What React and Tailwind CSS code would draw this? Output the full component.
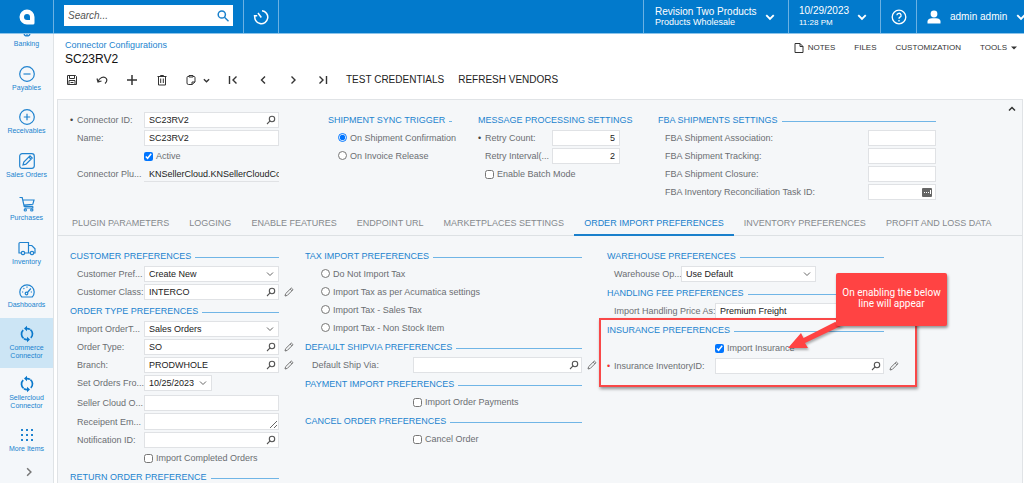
import { useId, useState } from 'react'

const TABS = [
  'PLUGIN PARAMETERS',
  'LOGGING',
  'ENABLE FEATURES',
  'ENDPOINT URL',
  'MARKETPLACES SETTINGS',
  'ORDER IMPORT PREFERENCES',
  'INVENTORY PREFERENCES',
  'PROFIT AND LOSS DATA',
]

function Icon({ className = 'w-4 h-4', size = 16, stroke = 1.2, children }) {
  return (
    <svg
      viewBox={`0 0 ${size} ${size}`}
      className={`block shrink-0 ${className}`}
      fill="none"
      stroke="currentColor"
      strokeWidth={stroke}
      aria-hidden="true"
    >
      {children}
    </svg>
  )
}

const Chevron = ({ className = 'w-2 h-2', stroke = 1.2 }) => (
  <Icon size={8} stroke={stroke} className={className}><path d="M1 2.5l3 3 3-3" /></Icon>
)

const Sync = () => (
  <Icon className="w-[18px] h-[18px] text-[#0a78cb]" size={18} stroke={1.7}>
    <path d="M5.6 13.4A5.4 5.4 0 0 1 5.2 5.2M12.4 4.6a5.4 5.4 0 0 1 .4 8.2" />
    <path d="M9 14.6A5.4 5.4 0 0 1 6 13.7M9 3.6a5.4 5.4 0 0 1 3 .8" />
    <path d="M9 .8v5.4L6 3.5zM9 17.2v-5.4l3 2.7z" fill="currentColor" stroke="none" />
  </Icon>
)

const NAV = [
  { label: 'Banking', icon: <Icon><path d="M8 10v4.500M5 11a3 3 0 0 0 6 0" /></Icon> },
  { label: 'Payables', icon: <Icon><circle cx="8" cy="8" r="7.300" /><path d="M4.500 8h7" /></Icon> },
  { label: 'Receivables', icon: <Icon><circle cx="8" cy="8" r="7.300" /><path d="M4.800 8h6.400M8 4.800v6.400" /></Icon> },
  {
    label: 'Sales Orders',
    icon: (
      <Icon>
        <rect x=".7" y=".7" width="14.600" height="14.600" rx="2.500" />
        <path d="M4 12l.8-3L11 2.800l2.200 2.200L7 11.200zM9.800 4l2.200 2.200" />
      </Icon>
    ),
  },
  {
    label: 'Purchases',
    icon: (
      <Icon>
        <path d="M.5 1.500h2.700l2 8.800h8.600M4 4h11l-1.200 4.300-9 .8M13.800 10.300v1.700H5.500" />
        <circle cx="6.300" cy="13.900" r="1.100" /><circle cx="12.800" cy="13.900" r="1.100" />
      </Icon>
    ),
  },
  {
    label: 'Inventory',
    icon: (
      <Icon className="w-[18px] h-[18px]" size={18}>
        <path d="M3 14H1V4.500q0-1 1-1h8.500V14H7M10.500 6.500h3.300L17 9.800V14h-1M12 14h-1.500" />
        <circle cx="5" cy="14" r="1.700" /><circle cx="14" cy="14" r="1.700" />
      </Icon>
    ),
  },
  {
    label: 'Dashboards',
    icon: (
      <Icon>
        <path d="M2.800 14a7.200 7.200 0 1 1 10.400 0z" />
        <circle cx="7.500" cy="10.500" r="1.300" />
        <path d="M8.500 9.500L11.800 5.500M3 9h1.200M8 3.600v1.200M4.500 5.200l.8.8M11.800 9H13" />
      </Icon>
    ),
  },
  { label: 'Commerce Connector', icon: <Sync />, tall: true, active: true },
  { label: 'Sellercloud Connector', icon: <Sync />, tall: true },
  {
    label: 'More Items',
    icon: (
      <Icon stroke={0}>
        {[3, 8, 13].map(y => [3, 8, 13].map(x => (
          <rect key={`${x}-${y}`} x={x - 1} y={y - 1} width="2" height="2" fill="currentColor" />
        )))}
      </Icon>
    ),
  },
]

function Sidebar() {
  return (
    <nav className="w-[54px] shrink-0 flex flex-col overflow-hidden bg-[#f4f7fa] border-r border-[#dfe3e6] text-[#2083cf]">
      {/* list is scrolled a little, the first icon is cut off */}
      <div className="flex-1 min-h-0 flex flex-col -mt-[21px]">
        {NAV.map(({ label, icon, tall, active }) => (
          <a
            key={label}
            href="#"
            className={`flex flex-col items-center gap-[2px] px-[6px] text-[7px] leading-[8px] text-center
                        ${tall ? 'h-[50px] shrink-0 pt-2' : 'flex-1 pt-[9px]'} ${active ? 'bg-[#cce5f5]' : ''}`}
          >
            <span className="h-4 flex items-center">{icon}</span>
            <span className={tall ? '' : 'whitespace-nowrap'}>{label}</span>
          </a>
        ))}
      </div>
      <button aria-label="Expand menu" className="h-[22px] flex justify-center pt-[6px] pl-1 text-[#777]">
        <Chevron className="w-[10px] h-[10px] -rotate-90" />
      </button>
    </nav>
  )
}

function Header() {
  return (
    <header className="h-[34px] shrink-0 flex bg-[#027acc] text-white border-b border-[#8cc4ea]">
      <a href="#" aria-label="Home" className="w-[54px] flex items-center justify-center border-r border-[#6bb1e3]">
        <svg viewBox="0 0 16 16" className="w-4 h-4">
          <path d="M8 .5a7.500 7.500 0 0 1 7.500 7.500v6q0 1.500-1.500 1.500H8A7.500 7.500 0 0 1 8 .5z" fill="white" />
          <path d="M8 5a3 3 0 0 1 3 3v3H8a3 3 0 0 1 0-6z" fill="#027acc" />
        </svg>
      </a>
      <div className="flex items-center px-[10px] pb-[2px] border-r border-[#6bb1e3]">
        <div className="w-[169px] h-[21px] flex items-center bg-white px-1">
          <input
            aria-label="Search"
            placeholder="Search..."
            className="flex-1 min-w-0 text-[10px] leading-4 italic text-[#333] placeholder:text-[#555] outline-none"
          />
          <button aria-label="Search" className="text-[#1a80cc]">
            <Icon className="w-3 h-3" size={12} stroke={1.5}>
              <circle cx="4.800" cy="4.500" r="3.600" /><path d="M7.500 7.200l4 4" />
            </Icon>
          </button>
        </div>
      </div>
      <button aria-label="Business date" className="w-[35px] flex items-center justify-center border-r border-[#6bb1e3]">
        <Icon stroke={1.5}><path d="M9 1.700A6.500 6.500 0 1 1 2 6.500M.8 6.800h3.400M8.300 8.500L5 4" /></Icon>
      </button>
      <div className="flex-1 border-r border-[#6bb1e3]" />
      <button className="w-[145px] flex items-center gap-2 pl-[11px] text-left border-r border-[#6bb1e3]">
        <span>
          <span className="block text-[10px] leading-[11px]">Revision Two Products</span>
          <span className="block text-[9px] leading-[11px]">Products Wholesale</span>
        </span>
        <Chevron className="w-[10px] h-[10px]" stroke={1.5} />
      </button>
      <button className="w-[92px] flex items-center gap-2 pl-[10px] text-left border-r border-[#6bb1e3]">
        <span>
          <span className="block text-[10px] leading-3">10/29/2023</span>
          <span className="block text-[8px] leading-3">11:28 PM</span>
        </span>
        <Chevron className="w-[10px] h-[10px]" stroke={1.5} />
      </button>
      <button aria-label="Help" className="w-9 flex items-center justify-center border-r border-[#6bb1e3]">
        <Icon stroke={1.3}>
          <circle cx="8" cy="8" r="6.800" />
          <path d="M5.900 6.300a2.100 2.100 0 1 1 3.100 1.900q-1 .5-1 1.500M8 11v1.400" />
        </Icon>
      </button>
      <button className="w-[107px] flex items-center gap-[9px] pl-[10px] whitespace-nowrap overflow-hidden">
        <svg viewBox="0 0 14 14" className="w-[14px] h-[14px] shrink-0" fill="white">
          <circle cx="7" cy="4" r="3.400" />
          <path d="M.5 13.500V11Q1 8.600 5 8.300h4q4 .3 4.500 2.700v2.500z" />
        </svg>
        <span className="text-[10px] leading-3">admin admin</span>
        <Chevron className="w-[10px] h-[10px]" stroke={1.5} />
      </button>
    </header>
  )
}

function ToolButton({ label, children }) {
  return (
    <button aria-label={label} className="w-[30px] h-6 flex items-center justify-center text-[#333]">{children}</button>
  )
}

function Toolbar() {
  return (
    <div className="flex items-center py-[1px]">
      <ToolButton label="Save">
        <Icon className="w-3 h-3" size={12} stroke={1}>
          <path d="M1.500 1.500h8l1 1v8h-9zM3.500 1.500v3h5v-3M3 10.500v-4h6v4M4.500 8.500h3" />
        </Icon>
      </ToolButton>
      <ToolButton label="Undo">
        <Icon className="w-3 h-3" size={12}><path d="M1 4.500l1 3.500 3.500-1M2 8C3 3.500 8 1.500 10.300 4.500q1.500 2.500-1.300 5" /></Icon>
      </ToolButton>
      <ToolButton label="Add">
        <Icon className="w-3 h-3" size={12} stroke={1.5}><path d="M1 6h10M6 1v10" /></Icon>
      </ToolButton>
      <ToolButton label="Delete">
        <Icon className="w-3 h-3" size={12} stroke={1}>
          <path d="M1.500 2.500h9M4.500 2.500v-1h3v1M2.500 2.500v8.500h7V2.500" />
          <path d="M4.700 4.500V9M7.300 4.500V9" />
        </Icon>
      </ToolButton>
      <button aria-label="Clipboard" className="w-[41px] h-6 flex items-center gap-[6px] pl-2 text-[#333]">
        <Icon className="w-3 h-3" size={12} stroke={1}>
          <path d="M4 2.500H3q-1 0-1 1V9q0 1.500 1.500 1.500H7L10 8V3.500q0-1-1-1H8M4 1.500h4v1.500H4zM7 10.500V8h3" />
        </Icon>
        <Chevron className="w-[7px] h-[7px]" stroke={1.5} />
      </button>
      <ToolButton label="First">
        <Icon className="w-3 h-3" size={12} stroke={1.4}><path d="M2.500 2v8M9.500 2.500L6 6l3.500 3.500" /></Icon>
      </ToolButton>
      <ToolButton label="Previous">
        <Icon className="w-3 h-3" size={12} stroke={1.4}><path d="M8 2.500L4.500 6 8 9.500" /></Icon>
      </ToolButton>
      <ToolButton label="Next">
        <Icon className="w-3 h-3" size={12} stroke={1.4}><path d="M4.500 2.500L8 6 4.500 9.500" /></Icon>
      </ToolButton>
      <ToolButton label="Last">
        <Icon className="w-3 h-3" size={12} stroke={1.4}><path d="M2.500 2.500L6 6 2.500 9.500M9.500 2v8" /></Icon>
      </ToolButton>
      <button className="ml-2 mr-[14px] text-[10px] leading-4 text-[#222]">TEST CREDENTIALS</button>
      <button className="text-[10px] leading-4 text-[#222]">REFRESH VENDORS</button>
    </div>
  )
}

function Heading({ children }) {
  return (
    <h3 className="h-[19px] flex items-center gap-1 whitespace-nowrap text-[#2384cf]">
      {children}
      <span className="flex-1 h-px mt-[3px] bg-[#70b5e6]" />
    </h3>
  )
}

const Lens = () => (
  <button aria-label="Look up" className="px-[2px] text-[#555]">
    <Icon className="w-[10px] h-[10px]" size={10} stroke={1.1}>
      <circle cx="6" cy="4" r="2.700" /><path d="M4.100 5.900L1 9" />
    </Icon>
  </button>
)

const Pencil = () => (
  <button aria-label="Edit" className="ml-[5px] text-[#666]">
    <Icon className="w-[10px] h-[10px]" size={10} stroke={0.9}>
      <path d="M1 9l.6-2.300L7.300 1l1.700 1.700-5.700 5.700zM6.200 2.100l1.700 1.700" />
    </Icon>
  </button>
)

const BOX = 'border border-[#e0e2e5] bg-white text-[#222]'

function Field({ label, labelWidth = 'w-[67px]', width = 'w-[135px]', value = '', options, kind, required, mark = 'text-[#444]', edit, numeric }) {
  const id = useId()
  const [val, setVal] = useState(value)
  const change = e => setVal(e.target.value)

  let control
  if (kind === 'select') {
    control = (
      <div className={`${width} shrink-0 h-4 relative`}>
        <select id={id} value={val} onChange={change} className={`w-full h-4 pl-1 pr-4 appearance-none outline-none ${BOX}`}>
          {(options || [value]).map(o => <option key={o}>{o}</option>)}
        </select>
        <Chevron className="absolute right-[5px] top-1 w-2 h-2 text-[#666] pointer-events-none" stroke={1} />
      </div>
    )
  } else if (kind === 'area') {
    control = <textarea id={id} value={val} onChange={change} className={`${width} shrink-0 h-[17px] px-1 resize outline-none ${BOX}`} />
  } else {
    control = (
      <div className={`${width} shrink-0 h-4 flex items-center ${kind === 'plain' ? 'border-b border-[#e0e2e5] text-[#222] pl-px' : BOX}`}>
        <input
          id={id}
          value={val}
          onChange={change}
          className={`flex-1 min-w-0 pl-1 bg-transparent outline-none ${kind === 'plain' ? '' : 'pr-1'} ${numeric ? 'text-right' : ''}`}
        />
        {kind === 'lookup' && <Lens />}
        {kind === 'task' && (
          <span className="w-[10px] h-[9px] mr-[3px] rounded-[1px] bg-[#666] flex items-center justify-center gap-px">
            <i className="w-px h-px bg-white" /><i className="w-px h-px bg-white" /><i className="w-px h-px bg-white" />
            <i className="w-px h-1 bg-white" />
          </span>
        )}
      </div>
    )
  }

  return (
    <div className={`flex items-center ${kind === 'area' ? 'h-[19px]' : 'h-[18px]'}`}>
      <span className={`w-[7px] shrink-0 ${mark}`}>{required && '•'}</span>
      <label htmlFor={id} className={`${labelWidth} shrink-0 whitespace-nowrap`}>{label}</label>
      {control}
      {edit && <Pencil />}
    </div>
  )
}

function Check({ label, checked = false, className = '' }) {
  return (
    <label className={`h-[18px] flex items-center gap-[3px] whitespace-nowrap ${className}`}>
      <input type="checkbox" defaultChecked={checked} className="w-[9px] h-[9px] accent-[#0075ff]" />
      {label}
    </label>
  )
}

function Radio({ label, name, checked = false }) {
  return (
    <label className="h-[18px] flex items-center gap-[3px] whitespace-nowrap">
      <input type="radio" name={name} defaultChecked={checked} className="w-[9px] h-[9px] mb-[2px] accent-[#0075ff]" />
      {label}
    </label>
  )
}

function Summary() {
  return (
    <section className="flex pt-[10px] pl-3 pr-[6px] h-[112px]">
      <div className="w-[258px] shrink-0 pt-px">
        <Field label="Connector ID:" value="SC23RV2" kind="lookup" required />
        <Field label="Name:" value="SC23RV2" />
        <Check label="Active" checked className="pl-[74px]" />
        <Field label="Connector Plu..." value="KNSellerCloud.KNSellerCloudConnector" kind="plain" />
      </div>
      <div className="w-[150px] shrink-0">
        <div className="w-[124px]"><Heading>SHIPMENT SYNC TRIGGER</Heading></div>
        <div className="pl-[10px]">
          <Radio name="sync" label="On Shipment Confirmation" checked />
          <Radio name="sync" label="On Invoice Release" />
        </div>
      </div>
      <div className="w-[180px] shrink-0">
        <div className="w-[141px]"><Heading>MESSAGE PROCESSING SETTINGS</Heading></div>
        <Field label="Retry Count:" width="w-[68px]" value="5" numeric required />
        <Field label="Retry Interval(..." width="w-[68px]" value="2" numeric />
        <Check label="Enable Batch Mode" className="pl-[7px]" />
      </div>
      <div className="w-[278px] shrink-0">
        <Heading>FBA SHIPMENTS SETTINGS</Heading>
        <Field label="FBA Shipment Association:" labelWidth="w-[203px]" width="w-[68px]" />
        <Field label="FBA Shipment Tracking:" labelWidth="w-[203px]" width="w-[68px]" />
        <Field label="FBA Shipment Closure:" labelWidth="w-[203px]" width="w-[68px]" />
        <Field label="FBA Inventory Reconciliation Task ID:" labelWidth="w-[203px]" width="w-[68px]" kind="task" />
      </div>
      <div className="flex-1 flex justify-end items-start">
        <button aria-label="Collapse" className="-mt-[5px] text-[#333]"><Chevron className="w-2 h-2 rotate-180" stroke={1.5} /></button>
      </div>
    </section>
  )
}

function Callout() {
  return (
    <>
      <div className="absolute -left-2 top-[72px] w-[318px] h-[69px] border-2 border-[#f94848] shadow-[1px_2px_3px_rgba(0,0,0,0.4)] pointer-events-none" />
      <svg viewBox="0 0 60 36" className="absolute left-[180px] top-[68px] w-[60px] h-9 drop-shadow-[1px_2px_1px_rgba(0,0,0,0.3)]" fill="#ff4343">
        <path d="M1 34L14 19l2.500 5L48 8l8 3-38 18 3 5z" />
      </svg>
      <div className="absolute left-[229px] top-[27px] w-[111px] h-[53px] px-1 pb-1 flex items-center justify-center text-center bg-[#ff4343]
                      rounded-[2px] shadow-[1px_2px_3px_rgba(0,0,0,0.4)] text-white text-[10px] leading-[11px] font-[Roboto,sans-serif]">
        On enabling the below line will appear
      </div>
    </>
  )
}

function OrderImport() {
  return (
    <section className="flex pt-[10px] pl-3">
      <div className="w-[235px] shrink-0">
        <div className="w-[209px]">
          <Heading>CUSTOMER PREFERENCES</Heading>
          <Field label="Customer Pref..." value="Create New" kind="select" />
          <Field label="Customer Class:" value="INTERCO" kind="lookup" edit />
          <Heading>ORDER TYPE PREFERENCES</Heading>
          <Field label="Import OrderT..." value="Sales Orders" kind="select" />
          <Field label="Order Type:" value="SO" kind="lookup" edit />
          <Field label="Branch:" value="PRODWHOLE" kind="lookup" edit />
          <Field label="Set Orders Fro..." width="w-[68px]" value="10/25/2023" kind="select" />
          <div className="pt-[2px]">
            <Field label="Seller Cloud O..." />
            <Field label="Receipent Em..." kind="area" />
            <Field label="Notification ID:" kind="lookup" />
          </div>
          <Check label="Import Completed Orders" className="pl-[74px]" />
          <Heading>RETURN ORDER PREFERENCE</Heading>
        </div>
      </div>
      <div className="w-[302px] shrink-0">
        <div className="w-[277px]">
          <Heading>TAX IMPORT PREFERENCES</Heading>
          <div className="pl-4">
            <Radio name="tax" label="Do Not Import Tax" />
            <Radio name="tax" label="Import Tax as per Acumatica settings" />
            <Radio name="tax" label="Import Tax - Sales Tax" />
            <Radio name="tax" label="Import Tax - Non Stock Item" />
          </div>
          <Heading>DEFAULT SHIPVIA PREFERENCES</Heading>
          <Field label="Default Ship Via:" labelWidth="w-[101px]" width="w-[169px]" kind="lookup" edit />
          <Heading>PAYMENT IMPORT PREFERENCES</Heading>
          <Check label="Import Order Payments" className="pl-[108px]" />
          <Heading>CANCEL ORDER PREFERENCES</Heading>
          <Check label="Cancel Order" className="pl-[108px]" />
        </div>
      </div>
      <div className="w-[277px] shrink-0 relative">
        <Heading>WAREHOUSE PREFERENCES</Heading>
        <Field label="Warehouse Op..." value="Use Default" kind="select" />
        <Heading>HANDLING FEE PREFERENCES</Heading>
        <Field label="Import Handling Price As:" labelWidth="w-[101px]" width="w-[169px]" value="Premium Freight" kind="select" />
        <Heading>INSURANCE PREFERENCES</Heading>
        <Check label="Import Insurance" checked className="pl-[108px]" />
        <Field label="Insurance InventoryID:" labelWidth="w-[101px]" width="w-[169px]" kind="lookup" mark="text-[#e33]" required edit />
        <Callout />
      </div>
    </section>
  )
}

export default function App() {
  const [tab, setTab] = useState('ORDER IMPORT PREFERENCES')

  return (
    <div className="h-screen flex flex-col overflow-hidden bg-white text-[9px] leading-3 text-[#6b6e72] font-['Liberation_Sans',Arial,sans-serif]">
      <Header />
      <div className="flex-1 min-h-0 flex">
        <Sidebar />
        <main className="flex-1 min-w-0 flex flex-col pl-[3px]">
          <div className="flex justify-between pt-[5px] pl-2 pr-[7px]">
            <div>
              <a href="#" className="block text-[#2384cf]">Connector Configurations</a>
              <h1 className="text-[12px] leading-4 text-[#111]">SC23RV2</h1>
            </div>
            <div className="flex gap-[19px] h-[18px] items-center text-[8px] text-[#333]">
              <button className="flex items-center gap-1">
                <Icon className="w-[10px] h-[10px]" size={10} stroke={1}><path d="M1 .5h5L9 3.500v6H1zM6 .5v3h3" /></Icon>
                NOTES
              </button>
              <button>FILES</button>
              <button>CUSTOMIZATION</button>
              <button className="flex items-center gap-1">
                TOOLS
                <svg viewBox="0 0 6 4" className="w-[6px] h-1" fill="currentColor"><path d="M0 .5h6L3 3.500z" /></svg>
              </button>
            </div>
          </div>
          <Toolbar />
          <div className="flex-1 min-h-0 overflow-hidden mt-[6px] mr-px border border-b-0 border-[#e0e3e6] bg-[#f5f7f9]">
            <Summary />
            <div role="tablist" className="flex pl-1 h-6 border-b border-[#dde1e4]">
              {TABS.map(t => (
                <button
                  key={t}
                  role="tab"
                  aria-selected={t === tab}
                  onClick={() => setTab(t)}
                  className={`px-[10px] -mb-px whitespace-nowrap border-b-2
                              ${t === tab ? 'text-[#1a80cc] border-[#1a80cc]' : 'text-[#85898d] border-transparent'}`}
                >
                  {t}
                </button>
              ))}
            </div>
            <OrderImport />
          </div>
        </main>
      </div>
    </div>
  )
}
